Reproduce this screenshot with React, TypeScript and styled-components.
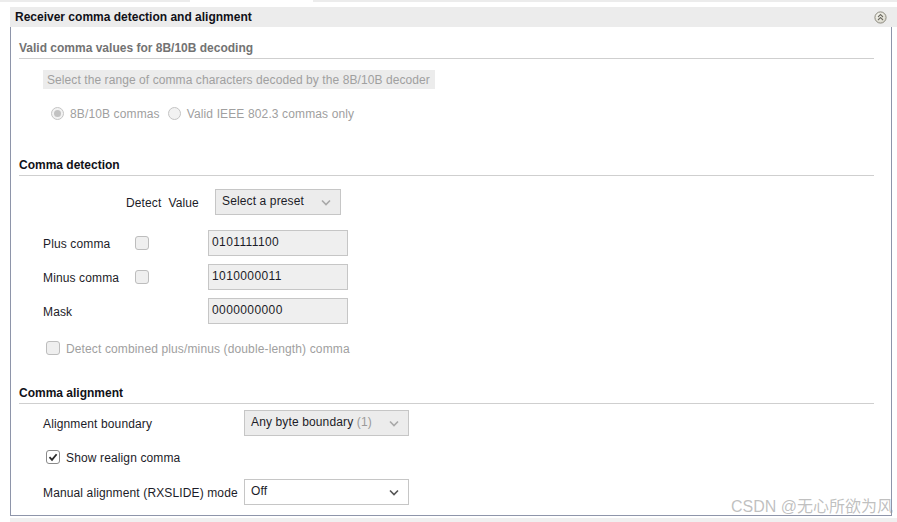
import React from "react";
import styled, { createGlobalStyle } from "styled-components";

const Global = createGlobalStyle`
  html, body { margin: 0; padding: 0; background: #ffffff; }
  body { font-family: "Liberation Sans", Arial, sans-serif; font-size: 12px; color: #1c1c28; }
  * { box-sizing: border-box; }
`;

const Page = styled.div`
  position: relative;
  width: 897px;
  height: 522px;
  overflow: hidden;
`;

const TopStrip = styled.div`
  display: flex;
  height: 2px;
  margin-bottom: 5px;
`;

const StripSeg = styled.div<{ $w?: number; $gap?: boolean }>`
  ${(p) => (p.$w ? `width: ${p.$w}px;` : "flex: 1;")}
  background: ${(p) => (p.$gap ? "#ffffff" : "#ececec")};
`;

const Header = styled.div`
  margin-left: 10px;
  height: 20px;
  background: #ececec;
  display: flex;
  align-items: center;
  justify-content: space-between;
  padding: 0 10px 0 5px;
`;

const HeaderTitle = styled.span`
  font-weight: bold;
  font-size: 12px;
  color: #111118;
`;

const Body = styled.div`
  margin-left: 10px;
  width: 882px;
  border: 1px solid #8e95aa;
  border-top: none;
  padding: 11px 17px 10px 8px;
  display: flex;
  flex-direction: column;
`;

const SectionTitle = styled.div<{ $mt?: number; $disabled?: boolean }>`
  margin-top: ${(p) => p.$mt ?? 0}px;
  height: 21px;
  padding-top: 1px;
  line-height: 19px;
  border-bottom: 1px solid #cfcfcf;
  font-weight: bold;
  font-size: 12px;
  color: ${(p) => (p.$disabled ? "#737373" : "#111118")};
`;

const InfoBox = styled.div<{ $mt?: number }>`
  margin-top: ${(p) => p.$mt ?? 0}px;
  margin-left: 24px;
  width: 392px;
  height: 19px;
  line-height: 20px;
  background: #ececec;
  color: #a0a0a0;
  padding-left: 4px;
  white-space: nowrap;
  letter-spacing: 0.08px;
`;

const Row = styled.div<{ $mt?: number; $indent?: number; $gap?: number; $h?: number }>`
  margin-top: ${(p) => p.$mt ?? 0}px;
  padding-left: ${(p) => p.$indent ?? 0}px;
  height: ${(p) => p.$h ?? 16}px;
  display: flex;
  align-items: center;
  gap: ${(p) => p.$gap ?? 6}px;
`;

const Label = styled.span<{ $disabled?: boolean; $w?: number }>`
  color: ${(p) => (p.$disabled ? "#a0a0a0" : "#1c1c28")};
  white-space: pre;
  letter-spacing: 0.13px;
  padding-top: 1px;
  ${(p) => (p.$w ? `width: ${p.$w}px; flex: none;` : "")}
`;

const Radio = styled.span<{ $checked?: boolean }>`
  width: 13px;
  height: 13px;
  border-radius: 50%;
  border: 1px solid #c4c4c4;
  background: #f2f2f2;
  display: inline-flex;
  align-items: center;
  justify-content: center;
  flex: none;
  &::after {
    content: "";
    width: 7px;
    height: 7px;
    border-radius: 50%;
    background: ${(p) => (p.$checked ? "#c2c2c2" : "transparent")};
  }
`;

const Checkbox = styled.span<{ $checked?: boolean }>`
  width: 14px;
  height: 14px;
  border-radius: 3px;
  border: 1px solid ${(p) => (p.$checked ? "#8a8a8a" : "#bdbdbd")};
  background: ${(p) => (p.$checked ? "#ffffff" : "#efefef")};
  display: inline-flex;
  align-items: center;
  justify-content: center;
  flex: none;
`;

const Select = styled.div<{ $w: number; $disabled?: boolean }>`
  width: ${(p) => p.$w}px;
  height: 26px;
  border: 1px solid #c6c6c6;
  background: ${(p) => (p.$disabled ? "#ececec" : "#ffffff")};
  display: flex;
  align-items: center;
  justify-content: space-between;
  padding: 0 9px 0 6px;
  flex: none;
  color: #1c1c28;
  white-space: nowrap;
  letter-spacing: 0.13px;
`;

const SelectText = styled.span`
  margin-top: -2px;
`;

const Muted = styled.span`
  color: #9a9a9a;
`;

const DetectGrid = styled.div<{ $mt?: number }>`
  margin-top: ${(p) => p.$mt ?? 0}px;
  margin-left: 24px;
  display: grid;
  grid-template-columns: 92px 73px 140px;
  grid-auto-rows: 26px;
  row-gap: 8px;
  align-items: center;
`;

const Field = styled.div`
  height: 26px;
  border: 1px solid #c6c6c6;
  background: #efefef;
  padding: 2px 0 0 3px;
  line-height: 18px;
  color: #1c1c28;
  letter-spacing: 0.4px;
`;

const AlignGrid = styled.div<{ $mt?: number }>`
  margin-top: ${(p) => p.$mt ?? 0}px;
  margin-left: 24px;
  display: grid;
  grid-template-columns: 201px 165px;
  align-items: center;
`;

const Watermark = styled.div`
  position: absolute;
  right: 4px;
  bottom: 5px;
  font-family: "Liberation Sans", "Noto Sans CJK SC", sans-serif;
  font-size: 16px;
  color: rgba(150, 150, 150, 0.6);
  white-space: nowrap;
`;

const BottomStrip = styled.div`
  margin: 2px 0 0 10px;
  height: 6px;
  background: #f0f0f0;
`;

const Chevron = ({ color }: { color: string }) => (
  <svg width="10" height="7" viewBox="0 0 10 7">
    <polyline points="1,1.5 5,5.5 9,1.5" fill="none" stroke={color} strokeWidth="1.6" />
  </svg>
);

const CollapseIcon = () => (
  <svg width="13" height="13" viewBox="0 0 13 13">
    <defs>
      <radialGradient id="cg" cx="0.4" cy="0.35" r="0.7">
        <stop offset="0" stopColor="#fbfbf6" />
        <stop offset="1" stopColor="#d6d4c8" />
      </radialGradient>
    </defs>
    <circle cx="6.5" cy="6.5" r="5.6" fill="url(#cg)" stroke="#8d8b80" strokeWidth="1" />
    <polyline points="4,6 6.5,3.6 9,6" fill="none" stroke="#6d6b62" strokeWidth="1.1" />
    <polyline points="4,9 6.5,6.6 9,9" fill="none" stroke="#6d6b62" strokeWidth="1.1" />
  </svg>
);

const Check = () => (
  <svg width="10" height="10" viewBox="0 0 10 10">
    <polyline points="1.5,5.2 4,7.8 8.6,2.2" fill="none" stroke="#2a2a2a" strokeWidth="1.8" />
  </svg>
);

export default function App() {
  return (
    <Page>
      <Global />
      <TopStrip>
        <StripSeg $w={190} />
        <StripSeg $w={123} $gap />
        <StripSeg />
      </TopStrip>
      <Header>
        <HeaderTitle>Receiver comma detection and alignment</HeaderTitle>
        <CollapseIcon />
      </Header>
      <Body>
        <SectionTitle $disabled>Valid comma values for 8B/10B decoding</SectionTitle>
        <InfoBox $mt={11}>Select the range of comma characters decoded by the 8B/10B decoder</InfoBox>
        <Row $mt={15} $indent={32} $h={18} $gap={6}>
          <Radio $checked />
          <Label $disabled>8B/10B commas</Label>
          <Radio style={{ marginLeft: 2 }} />
          <Label $disabled>Valid IEEE 802.3 commas only</Label>
        </Row>

        <SectionTitle $mt={33}>Comma detection</SectionTitle>
        <Row $mt={13} $indent={107} $h={26} $gap={15}>
          <Label $w={74}>{"Detect  Value"}</Label>
          <Select $w={126} $disabled>
            <SelectText>Select a preset</SelectText>
            <Chevron color="#a8a8a8" />
          </Select>
        </Row>
        <DetectGrid $mt={15}>
          <Label>Plus comma</Label>
          <Checkbox />
          <Field>0101111100</Field>
          <Label>Minus comma</Label>
          <Checkbox />
          <Field>1010000011</Field>
          <Label>Mask</Label>
          <span />
          <Field>0000000000</Field>
        </DetectGrid>
        <Row $mt={16} $indent={27} $gap={6}>
          <Checkbox />
          <Label $disabled>Detect combined plus/minus (double-length) comma</Label>
        </Row>

        <SectionTitle $mt={27}>Comma alignment</SectionTitle>
        <AlignGrid $mt={6}>
          <Label>Alignment boundary</Label>
          <Select $w={165} $disabled>
            <SelectText>
              Any byte boundary <Muted>(1)</Muted>
            </SelectText>
            <Chevron color="#a8a8a8" />
          </Select>
        </AlignGrid>
        <Row $mt={13} $indent={27} $gap={6}>
          <Checkbox $checked>
            <Check />
          </Checkbox>
          <Label>Show realign comma</Label>
        </Row>
        <AlignGrid $mt={14}>
          <Label>Manual alignment (RXSLIDE) mode</Label>
          <Select $w={165}>
            <SelectText>Off</SelectText>
            <Chevron color="#555555" />
          </Select>
        </AlignGrid>
      </Body>
      <BottomStrip />
      <Watermark>CSDN @无心所欲为风</Watermark>
    </Page>
  );
}
